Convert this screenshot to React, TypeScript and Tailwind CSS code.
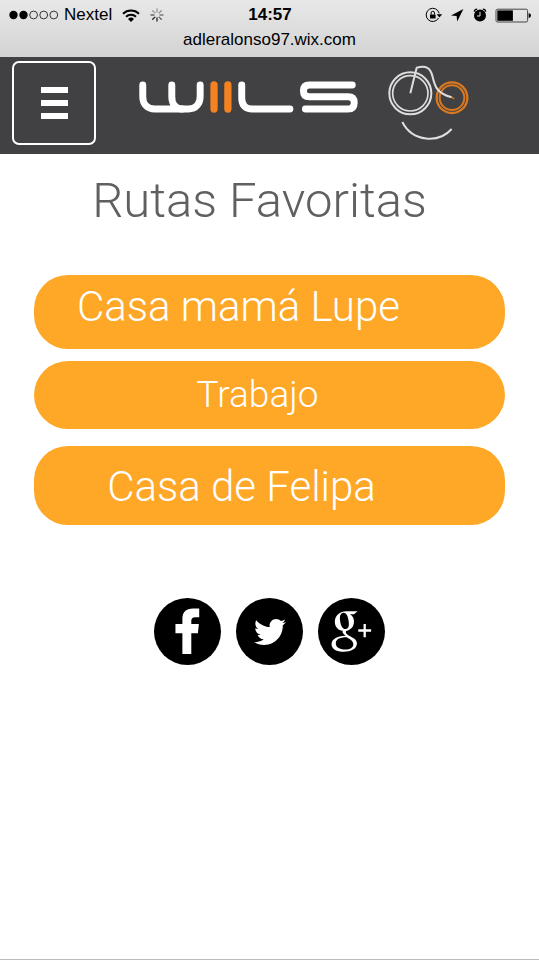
import { FaTwitter } from "react-icons/fa";

function SignalDots() {
  return (
    <svg viewBox="0 0 50 10" className="h-[10px] w-[50px]" role="img" aria-label="Señal">
      <circle cx="4.5" cy="5" r="4.2" />
      <circle cx="14.5" cy="5" r="4.2" />
      <g fill="none" stroke="#222" strokeWidth="0.9">
        <circle cx="24.6" cy="5" r="3.9" />
        <circle cx="34.7" cy="5" r="3.9" />
        <circle cx="44.8" cy="5" r="3.9" />
      </g>
    </svg>
  );
}

function Wifi() {
  return (
    <svg viewBox="0 0 18 13" className="h-[13px] w-[18px]" role="img" aria-label="Wi-Fi">
      <g fill="none" stroke="#000" strokeWidth="2">
        <path d="M1 4.8 A11.6 11.6 0 0 1 17 4.8" />
        <path d="M4 7.8 A7.2 7.2 0 0 1 14 7.8" />
      </g>
      <path d="M9 13 L6 10 A4.4 4.4 0 0 1 12 10 Z" />
    </svg>
  );
}

function Spinner() {
  return (
    <svg viewBox="-7 -7 14 14" className="h-[14px] w-[14px]" role="img" aria-label="Cargando">
      <g stroke="#222" strokeWidth="1.3" strokeLinecap="round">
        <path d="M0 -3 V-6" opacity=".4" />
        <path d="M2.1 -2.1 L4.3 -4.3" opacity=".45" />
        <path d="M3 0 H6" opacity=".55" />
        <path d="M2.1 2.1 L4.3 4.3" opacity=".7" />
        <path d="M0 3 V6" />
        <path d="M-2.1 2.1 L-4.3 4.3" />
        <path d="M-3 0 H-6" opacity=".65" />
        <path d="M-2.1 -2.1 L-4.3 -4.3" opacity=".4" />
      </g>
    </svg>
  );
}

function StatusIcons() {
  return (
    <svg viewBox="0 0 106 16" className="h-4 w-[106px]" role="img" aria-label="Estado del teléfono">
      <path d="M13.6 11 A6.6 6.6 0 1 1 14.2 6.4" fill="none" stroke="#000" strokeWidth="1" />
      <path d="M11.6 7.2 H17.2 L14.4 10.4 Z" />
      <rect x="5" y="7.4" width="5.6" height="4.2" rx=".5" />
      <path d="M6.1 7.6 V6 A1.7 1.7 0 0 1 9.5 6 V7.6" fill="none" stroke="#000" strokeWidth="1" />
      <path d="M38.4 2 L26 8.6 L31.6 9 L32.2 14.6 Z" />
      <circle cx="55" cy="8.6" r="6" />
      <path d="M49.2 4.6 A3 3 0 0 1 52.2 2.2 M57.8 2.2 A3 3 0 0 1 60.8 4.6" fill="none" stroke="#000" strokeWidth="1.3" />
      <path d="M55 4.8 V9 H52" fill="none" stroke="#e4e4e4" strokeWidth="1" />
      <rect x="71" y="2.2" width="31.6" height="12.8" rx="1.5" fill="none" stroke="#444" strokeWidth="1" />
      <rect x="72.3" y="3.4" width="15.6" height="10.4" />
      <path d="M103.6 6.2 A2.4 2.4 0 0 1 103.6 11 Z" />
    </svg>
  );
}

function Wordmark() {
  return (
    <svg viewBox="25 52 663 97" className="h-8 w-[221px]" role="img" aria-label="Wiils">
      <g fill="none" stroke="#fff" strokeWidth="21" strokeLinecap="round" strokeLinejoin="round">
        <path d="M36 64 V100 C36 122 50 137 72 137 H174 C198 137 210 120 210 98 V64" />
        <path d="M124 64 V100 C124 122 136 137 156 137" />
        <path d="M336 64 V104 C336 126 348 137 368 137 H482" />
        <path d="M671 64 H541 Q523 64 523 82 Q523 100 541 100 H658 Q677 100 677 118 Q677 137 658 137 H529" />
      </g>
      <path d="M252 64 V137 M294 64 V137" stroke="#f58220" strokeWidth="22" strokeLinecap="round" />
    </svg>
  );
}

function BikeFace() {
  return (
    <svg viewBox="24 24 243 231" className="h-[77px] w-[81px]" fill="none" aria-hidden="true">
      <g stroke="#dedede">
        <circle cx="91" cy="112" r="63" strokeWidth="6" />
        <circle cx="91" cy="112" r="53" strokeWidth="5" />
        <path d="M67 198 C98 259 177 262 215 219" strokeWidth="6" />
      </g>
      <g stroke="#d87820">
        <circle cx="216" cy="125" r="46" strokeWidth="7" />
        <circle cx="216" cy="125" r="37" strokeWidth="6" />
        <path d="M216 124 L223 129" strokeWidth="4" />
      </g>
      <path d="M91 112 L110 35 C139 27 151 36 157 59 C165 93 170 111 215 124" stroke="#dedede" strokeWidth="6" strokeLinejoin="round" />
    </svg>
  );
}

const routes = [
  { name: "Casa mamá Lupe", style: "mb-3 h-[74px] pr-[62px] pb-[10px] text-[42px]" },
  { name: "Trabajo", style: "mb-[17px] h-[68px] pr-6 text-[37px]" },
  { name: "Casa de Felipa", style: "h-[79px] pt-0.5 pr-14 text-[42px]" },
];

const circle = "flex size-[67px] items-center justify-center rounded-full bg-black text-white";

export default function App() {
  return (
    <div className="flex min-h-screen flex-col border-b border-[#bbbbbb] bg-white">
      <div className="h-[57px] bg-linear-to-b from-[#e8e8e8] to-[#d3d3d4] pt-[5px] font-['Liberation_Sans',sans-serif] text-[17px] leading-5 text-black">
        <div className="grid grid-cols-[1fr_auto_1fr] items-center pr-2 pl-[9px]">
          <div className="flex items-center">
            <SignalDots />
            <span className="mr-[10px] ml-[5px]">Nextel</span>
            <Wifi />
            <span className="ml-[10px]"><Spinner /></span>
          </div>
          <time className="font-bold">14:57</time>
          <div className="flex justify-end"><StatusIcons /></div>
        </div>
        <div className="mt-[5px] text-center">adleralonso97.wix.com</div>
      </div>

      <header className="flex items-start bg-[#414042] px-3 pt-1 pb-2">
        <button type="button" aria-label="Menú" className="mb-px flex size-[84px] shrink-0 flex-col items-center justify-center gap-[7px] rounded-[7px] border-2 border-white">
          <span className="h-[6px] w-[27px] bg-white" />
          <span className="h-[6px] w-[27px] bg-white" />
          <span className="h-[6px] w-[27px] bg-white" />
        </button>
        <a href="#" className="mt-[3px] ml-[42px] flex items-start gap-[29px]">
          <span className="pt-[17px]"><Wordmark /></span>
          <BikeFace />
        </a>
      </header>

      <main className="flex flex-col font-[Roboto,sans-serif] font-light">
        <h1 className="mt-[18px] pr-5 text-center text-[49px] leading-[58px] text-[#606062]">Rutas Favoritas</h1>
        <div className="mx-[34px] mt-[45px] flex flex-col">
          {routes.map((route) => (
            <button key={route.name} type="button" className={`rounded-[34px] bg-[#ffa726] text-center leading-[50px] text-white ${route.style}`}>
              {route.name}
            </button>
          ))}
        </div>
        <nav aria-label="Redes sociales" className="mt-[73px] flex justify-center gap-[15px]">
          <a href="#" aria-label="Facebook" className={circle}>
            <svg viewBox="25 22 203 203" className="size-full" fill="currentColor">
              <path d="M111 192 V129 H90 V101 H111 V86 C111 64 123 54 143 54 H162 V80 H150 C141 80 138 84 138 92 V101 H161 L158 129 H138 V192 Z" />
            </svg>
          </a>
          <a href="#" aria-label="Twitter" className={circle}>
            <FaTwitter className="size-8" />
          </a>
          <a href="#" aria-label="Google Plus" className={circle}>
            <svg viewBox="520 22 203 203" className="size-full" fill="currentColor" fillRule="evenodd">
              <path d="M640 62 L629 71 H617 C626 77 629 84 629 93 C629 111 616 122 599 122 C582 122 571 110 571 94 C571 75 586 62 606 62 Z M597 67 C588 68 585 77 587 91 C589 107 595 117 604 116 C612 115 615 107 613 93 C611 77 606 66 597 67 Z" />
              <path d="M596 119 H607 C601 127 606 131 614 136 C628 143 638 148 638 160 C638 176 620 185 598 185 C577 185 561 177 561 162 C561 146 577 137 604 136 C596 130 592 126 596 119 Z M607 141 C584 141 574 148 574 159 C574 171 585 178 602 178 C618 178 627 172 627 162 C627 153 620 149 607 141 Z" />
              <path d="M658 101 H665 V117 H681 V124 H665 V141 H658 V124 H642 V117 H658 Z" />
            </svg>
          </a>
        </nav>
      </main>
    </div>
  );
}
